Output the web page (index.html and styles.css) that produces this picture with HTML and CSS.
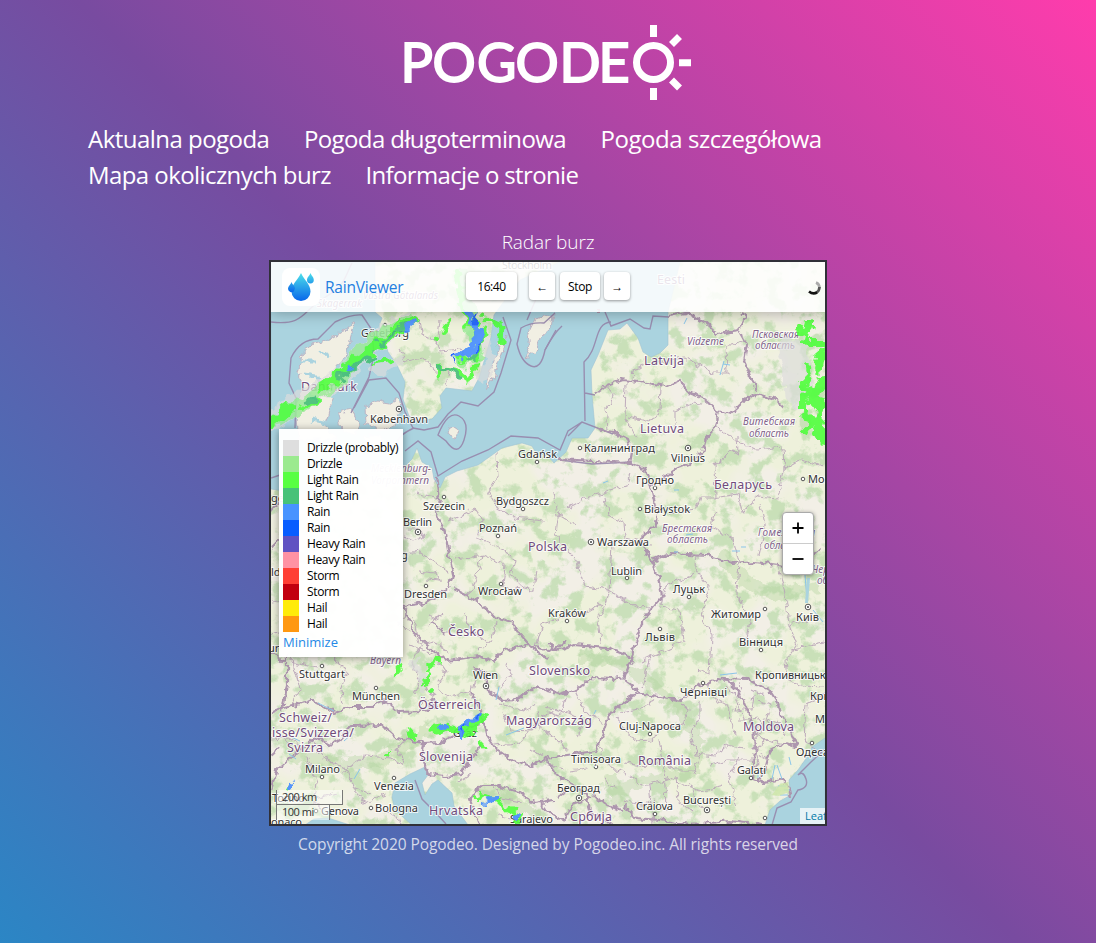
FILE: index.html
```html
<!DOCTYPE html>
<html lang="pl">
<head>
<meta charset="utf-8">
<title>Pogodeo</title>
<link rel="stylesheet" href="styles.css">
</head>
<body>
<header class="header">
  <svg class="logo" viewBox="400 20 296 84" role="img" aria-label="Pogodeo">
    <text class="logo-text" y="81.5" x="400.5 432.5 477 515.500 559.500 598.500">POGODE</text>
    <g fill="none" stroke="#fff" stroke-width="7">
      <circle cx="653.5" cy="62.4" r="17"/>
      <path d="M653.5 25v12M653.5 88v12M679 62.7h12M671.5 44.5l8-8M671.5 80l8 8"/>
    </g>
  </svg>
</header>
<nav class="nav">
  <a class="nav-link n1">Aktualna pogoda</a>
  <a class="nav-link n2">Pogoda długoterminowa</a>
  <a class="nav-link n3">Pogoda szczegółowa</a>
  <a class="nav-link n4">Mapa okolicznych burz</a>
  <a class="nav-link n5">Informacje o stronie</a>
</nav>
<main class="main">
  <h1 class="title">Radar burz</h1>
  <section class="radar">
    <svg class="map" viewBox="271 262 554 562">
      <defs>
        <filter id="forest" x="0" y="0" width="100%" height="100%" color-interpolation-filters="sRGB">
          <feTurbulence type="fractalNoise" baseFrequency=".06" numOctaves="6" seed="8"/>
          <feColorMatrix values="0 0 0 0 .74  0 0 0 0 .86  0 0 0 0 .68  7 0 0 0 -3.500"/>
        </filter>
        <filter id="field" x="0" y="0" width="100%" height="100%" color-interpolation-filters="sRGB">
          <feTurbulence type="fractalNoise" baseFrequency=".018" numOctaves="3" seed="21"/>
          <feColorMatrix values="0 0 0 0 .935  0 0 0 0 .945  0 0 0 0 .86  0 6 0 0 -2.3"/>
        </filter>
        <filter id="rough" x="-5%" y="-5%" width="110%" height="110%" color-interpolation-filters="sRGB">
          <feTurbulence type="fractalNoise" baseFrequency=".15" numOctaves="2" seed="4"/>
          <feDisplacementMap in="SourceGraphic" scale="8" xChannelSelector="R" yChannelSelector="G"/>
        </filter>
        <filter id="rain" x="-10%" y="-10%" width="120%" height="120%" color-interpolation-filters="sRGB">
          <feTurbulence type="fractalNoise" baseFrequency=".1" numOctaves="2" seed="9"/>
          <feDisplacementMap in="SourceGraphic" scale="15" xChannelSelector="R" yChannelSelector="G"/>
          <feGaussianBlur stdDeviation=".5"/>
        </filter>
        <linearGradient id="drop" x1="0" y1="0" x2="0" y2="1"><stop stop-color="#4de0ea"/><stop offset="1" stop-color="#0866ea"/></linearGradient>
      </defs>
      <rect x="271" y="262" width="554" height="562" fill="#f2efe6"/>
      <rect x="271" y="262" width="554" height="562" filter="url(#field)"/>
      <rect x="271" y="262" width="554" height="562" filter="url(#forest)" opacity=".75"/>
      <g fill="none" stroke="#b4d5a0" stroke-opacity=".4" stroke-width="12" filter="url(#rain)">
        <path d="M580 655l40 8 30 20 30 25 18 35 -5 30 -50 8 -30 10M737 580l40 15 40 -10M290 755l50 10 40 -5 50 -30M610 775l10 30M720 555l30 30M480 785l60 30"/>
      </g>

      <!-- seas -->
      <g fill="#aad3df" stroke="#9fc3d3" stroke-width=".6">
        <path d="M271 262H375V312L382 318 379 326 384 338 388 352 397 365 405 382 403 399 409 416 418 421 432 419 442 408 440 396 446 388 472 391 479 378 485 358 491 337 494 315 505 300 520 280 560 262H680L668 312V345L660 353 651 357 643 352 638 338 627 323 620 329 608 330 602 345 598 355 591 370 592 395 595 428 588 438H572L566 452 554 463 548 456 536 453 532 446 522 443 502 448 478 465 457 471 445 477 440 488 434 479 432 468 422 462 417 448 412 459 403 468 350 470 340 500 271 489Z"/>
        <path d="M392 797L395 783 410 774 425 767 428 775 422 783 425 795 432 784 438 780 452 793 454 806 468 825H412L395 810ZM328 818L350 825H305L314 819Z"/>
        <path d="M825 738L812 747 805 760 798 770 789 780 791 795 780 801 770 810 765 825H825Z"/>
      </g>

      <!-- peninsulas and islands -->
      <g fill="#f1efe3" stroke="#b9a9bd" stroke-width=".8" filter="url(#rough)">
        <path d="M355 323L340 333 326 341 311 345 302 355 298 372 303 388 295 407 298 440H336L325 425 329 410 335 393 348 386 342 376 337 367 346 356 350 340Z"/>
        <path d="M338 413L352 410 360 424 355 435 341 430ZM365 407L378 401 390 403 398 398 401 411 394 426 382 431 366 423ZM363 435l18 2 5 7 -20 3z"/>
        <path d="M505 336L500 345 489 374 487 389 492 381 503 348ZM553 315L535 319 528 334 530 346 526 358 534 352 540 338 551 328ZM449 427L458 433 455 438 447 434Z"/>
      </g>
      <path d="M304 374l12 2 8 12M318 350l12 6M299 361l18 0M329 395l13 2M340 368l-9 7M308 393l12 9M326 423l-14 -3" stroke="#aad3df" stroke-width="3" fill="none" filter="url(#rough)"/>

      <!-- maritime limits -->
      <g fill="none" stroke="#9787ac" stroke-width="1.400" opacity=".9">
        <path d="M271 322C305 326 302 311 324 298S344 278 352 263M295 428L296 398 289 383 291 358Q300 339 318 339L335 322Q351 314 362 315L372 330 374 355 369 377 351 413M354 408L369 380 386 378 399 393 405 412 413 428 424 430 438 427 448 414Q455 408 461 402L478 406 494 392 501 373 511 340 503 317"/>
        <path d="M555 313L544 323Q531 322 521 328L517 344Q521 362 531 366T545 350L556 330M405 451L418 441 431 452 438 476 462 461 488 450 511 436 538 438 560 450 568 431 582 422 613 434M438 435Q448 410 459 416T464 440 446 441ZM414 428Q398 435 397 443M560 460L592 464 632 462M605 312L611 326 630 319 644 328 650 329 653 316 669 317M611 322C593 323 600 348 584 362L585 421M585 393L595 395M582 422L568 436"/>
        <path d="M415 780L422 799 435 812 446 824M772 825L777 808 791 802 798 790Q809 788 806 779T798 775L811 762 824 750"/>
        <path d="M527 320L536 299 539 282M545 350Q554 333 562 326M271 478L280 475"/>
      </g>

      <!-- national borders -->
      <g fill="none" stroke="#ad96ae" stroke-width="2.200" stroke-linejoin="round" filter="url(#rough)">
        <path d="M436 476L439 500 436 515 444 528 448 550 453 574 449 590M453 588L467 595 486 608 494 617 512 622 519 633 534 650 548 659M404 606L426 603 446 589M404 606L412 630 432 650 448 661 478 656 493 662 504 650 527 645 548 650 558 647 566 640M595 312L600 312M668 316L686 312 705 323 717 334 739 331 746 315 742 312M740 333L747 345 744 361 752 379 756 391M596 394L606 386 622 380 640 382 667 386 680 380 688 392 702 397 718 410 730 414 742 403 756 394 774 399 784 408"/>
        <path d="M718 410L715 428 706 438 702 452 688 464 678 468 657 482M597 429L614 432 628 439 632 452 630 463 559 459M630 463L644 468 649 479 657 513 656 525 640 539 649 557 659 577 662 596 644 618 634 646 632 657M652 561L670 553 706 555 734 564 755 562 785 566 806 557 820 549"/>
        <path d="M548 645L560 650 574 645 606 648 632 657 624 677 614 679 591 678 579 688 560 694 535 687 516 700 503 701 488 691 486 674 472 667M633 657L624 680 639 692 615 709 607 721 600 742 595 751 581 753 546 758M633 693L660 696 682 701 694 688 717 679 728 680 742 697 753 725 755 750 753 779 763 783 780 779 788 785 791 799"/>
        <path d="M722 678L748 679 770 691 778 703 780 714 790 730 797 747 785 743 770 751 766 766 758 780M471 692L481 711 486 734 496 749 513 761 532 766 546 758 557 775 573 784 586 795 591 813 612 824M271 714L284 708 305 703 312 700 335 713 350 707 373 707 384 700 399 712 423 711 435 705 432 697M271 790L277 770 293 756 316 737 331 745 340 740 352 726 382 725 397 738 424 743 440 742 462 731 480 724M424 743L422 759 428 774 447 776 462 774 470 760 482 744M479 825L470 800 481 785 496 785 519 792 535 803 552 800"/>
        <path d="M622 810L608 805 592 795M624 805L635 818 659 820 690 825 730 821 764 825M271 511L279 500 285 520M271 652L282 662 290 654M287 660L287 685 283 711M591 798L571 805 563 823M557 797L568 789M563 820L550 814 541 803M271 548L279 540M445 633L432 622M271 756L280 748"/>
      </g>

      <!-- regional borders -->
      <g fill="none" stroke="#b9a4b8" stroke-width="1.1" opacity=".85" filter="url(#rough)">
        <path d="M468 360L460 350 440 352 437 341 421 334 419 319M446 386L449 371 435 371 423 358 406 361 399 349M440 320L437 344M632 380L633 369 653 362 685 358 713 373 727 373 726 346 743 342M605 385L613 395 606 408 608 429M626 382L625 418 638 439M661 386L660 410 650 422 628 417M676 429L676 411 692 403 702 404M715 428L745 445 756 450 783 447 784 469 800 460 824 466"/>
        <path d="M566 509L589 497 627 486 630 472M605 498L608 514 624 523 625 538 641 542M496 453L497 478 488 492 498 508 515 518 544 521M450 520L475 509 482 519 477 538 504 550 515 561 511 576 530 591M456 559L484 555 505 565 503 587 533 590 536 571M482 555L473 589 465 596M553 493L557 514 577 526M559 509L556 535 578 563 585 586 609 590 626 603M612 544L609 592 598 620 601 643M612 543L652 545M535 650L543 624 566 615 586 613 601 604M609 590L628 602 640 608 656 606"/>
        <path d="M667 513L696 510 700 498 716 498 715 465 733 450 738 453 737 437M715 510L711 526 733 539 736 550 739 562M714 498L738 494 742 513 758 496 778 498 785 465M759 502L765 530 759 555M739 560L737 594 750 623 744 645M697 554L696 570 710 588 701 618 712 635 710 674 697 670M695 573L666 586 661 604M659 607L680 610 684 641 667 649 641 661M777 565L784 588 789 624 797 645 786 660 788 680 802 686 824 687M789 625L817 617M790 650L824 642M806 704L804 740 814 750M651 657L642 686M806 704L824 694M707 683L710 695 727 704 735 735"/>
        <path d="M620 712L640 709 655 699M617 718L635 741 652 740 661 729 683 725 688 709 682 703M625 763L645 767 662 760 674 770 695 770M659 740L663 760 665 785 666 810M629 774L644 786 671 778 700 791 724 785M700 700L700 717 690 733 697 754 715 756 726 745 744 748M701 753L693 775M710 765L727 760 754 760M691 783L697 805 710 812M738 756L729 779 737 805M622 801L641 805 656 800M649 785L653 823M676 776L678 801 691 812M599 747L610 767 625 774"/>
        <path d="M404 554L421 552 433 561 448 571M415 493L436 497M407 530h14l3 7 -11 4 -8 -4M418 571l17 2 5 7 -13 -1M271 602L298 597M271 634L283 631M292 659L300 689 291 704M290 662L317 668M334 659L347 672 341 690 343 704M413 617L419 644 433 641 449 652M427 626L443 614 437 620 428 617M465 613L470 632 487 642M496 622L491 641 479 651M407 610L399 625 411 633M410 645L435 655 446 672 437 685 446 697 472 691 475 679M422 645L412 663 420 681 413 694M422 685L435 695 417 706"/>
        <path d="M498 689L510 674 506 665M500 704L523 710 535 704M504 712L511 730 531 731 549 712 560 716 567 696M495 745L519 743 535 724M537 710L540 728 558 741 569 751M546 707L568 713 583 721 578 736M574 689L585 712 607 724M529 748L542 757M271 739L289 737 300 745M280 735L294 750M314 740L322 757 347 769 355 789 370 794M354 790L364 803 387 794M307 757L317 783 315 799 336 793M311 801L328 813M384 810L405 824M342 773L365 756 392 758 404 766M408 737L396 749 405 764M493 785L501 798 521 802M458 783L471 775M500 815L519 818M545 764L563 769M604 779L615 789M571 771L588 768"/>
        <path d="M726 686l12 12 -4 12 18 0 2 -15M739 684l3 15M752 690l12 6M738 706l6 13 14 -2 6 12 -9 11M758 700l12 5 -4 14 12 4M763 719l14 10M755 732l12 8 -12 10 4 13 -8 8M738 720l12 0M765 740l20 4M758 725l-4 25M760 755l10 6M777 720l8 15"/>
      </g>

      <g fill="none" stroke="#8ac5e9" stroke-width="1">
        <path d="M720 375l4-14M704 340v4M723 364l7 1M687 318l-3 6M674 490h5M686 535l7-1M674 552h4M732 551h8M741 547h5M688 532l4-3M506 735l18-7M354 779l6-10M344 741l9-8M291 737l9 4M289 754l7 5M318 703l16 8M782 779l-5-14M775 765l-3 14M758 771v7M791 765l-2-8M805 575l2 25M813 610l10 12M720 675l17-2M596 710l-2 4M603 483l5-2M496 700l3-13M778 786h8m-2 4h6m-10 5h8"/>
      </g>
      <path d="M807 578l3 0-2 25-3 0z" fill="#aad3df"/>
      <path d="M780 784l8-2 1 10-10 4-7-1z" fill="#cde6a8" opacity=".8"/>

      <!-- city markers -->
      <g fill="#fff" stroke="#555" stroke-width="1">
        <circle cx="385" cy="325" r="1.8"/><circle cx="537" cy="462" r="1.8"/><circle cx="580" cy="448" r="1.8"/><circle cx="444" cy="497" r="1.8"/><circle cx="523" cy="509" r="1.8"/><circle cx="498" cy="536" r="1.8"/><circle cx="655" cy="488" r="1.8"/><circle cx="640" cy="509" r="1.8"/><circle cx="627" cy="578" r="1.8"/><circle cx="501" cy="584" r="1.8"/><circle cx="426" cy="586" r="1.8"/><circle cx="689" cy="597" r="1.8"/><circle cx="765" cy="609" r="1.8"/><circle cx="567" cy="621" r="1.8"/><circle cx="660" cy="629" r="1.8"/><circle cx="761" cy="650" r="1.8"/><circle cx="322" cy="666" r="1.8"/><circle cx="376" cy="688" r="1.8"/><circle cx="703" cy="683" r="1.8"/><circle cx="650" cy="734" r="1.8"/><circle cx="812" cy="743" r="1.8"/><circle cx="322" cy="777" r="1.8"/><circle cx="394" cy="778" r="1.8"/><circle cx="596" cy="767" r="1.8"/><circle cx="751" cy="778" r="1.8"/><circle cx="371" cy="808" r="1.8"/><circle cx="655" cy="814" r="1.8"/><circle cx="765" cy="818" r="1.8"/><circle cx="803" cy="479" r="1.8"/><circle cx="316" cy="811" r="1.8"/>
        <g><circle cx="399" cy="409" r="2.8"/><circle cx="418" cy="532" r="2.8"/><circle cx="688" cy="448" r="2.8"/><circle cx="591" cy="542" r="2.8"/><circle cx="808" cy="607" r="2.8"/><circle cx="486" cy="686" r="2.8"/><circle cx="579" cy="798" r="2.8"/><circle cx="707" cy="810" r="2.8"/></g>
        <g fill="#444" stroke="none"><circle cx="399" cy="409" r="1"/><circle cx="418" cy="532" r="1"/><circle cx="688" cy="448" r="1"/><circle cx="591" cy="542" r="1"/><circle cx="808" cy="607" r="1"/><circle cx="486" cy="686" r="1"/><circle cx="579" cy="798" r="1"/><circle cx="707" cy="810" r="1"/></g>
      </g>

      <g class="city">
        <text x="361" y="337" textLength="48">Göteborg</text><text x="370" y="423" textLength="58">København</text><text x="518" y="458" textLength="39">Gdańsk</text><text x="584" y="452" textLength="71">Калининград</text><text x="671" y="462" textLength="34">Vilnius</text><text x="636" y="484" textLength="38">Гродно</text><text x="423" y="510" textLength="42">Szczecin</text><text x="496" y="505" textLength="53">Bydgoszcz</text><text x="644" y="513" textLength="46">Białystok</text><text x="403" y="526" textLength="29">Berlin</text><text x="479" y="532" textLength="38">Poznań</text><text x="597" y="546" textLength="52">Warszawa</text><text x="611" y="575" textLength="31">Lublin</text><text x="478" y="595" textLength="44">Wrocław</text><text x="404" y="598" textLength="43">Dresden</text><text x="673" y="593" textLength="32">Луцьк</text><text x="548" y="617" textLength="38">Kraków</text><text x="711" y="618" textLength="50">Житомир</text><text x="796" y="621" textLength="23">Київ</text><text x="645" y="641" textLength="30">Львів</text><text x="739" y="646" textLength="44">Вінниця</text><text x="299" y="678" textLength="46">Stuttgart</text><text x="473" y="679" textLength="25">Wien</text><text x="755" y="679" textLength="84">Кропивницький</text><text x="352" y="700" textLength="48">München</text><text x="680" y="696" textLength="47">Чернівці</text><text x="810" y="700">Кривий</text><text x="815" y="723">Миколаїв</text><text x="619" y="730" textLength="62">Cluj-Napoca</text><text x="453" y="737" textLength="24">Graz</text><text x="796" y="756" textLength="33">Одеса</text><text x="571" y="763" textLength="50">Timișoara</text><text x="305" y="773" textLength="35">Milano</text><text x="737" y="774" textLength="29">Galați</text><text x="374" y="790" textLength="40">Venezia</text><text x="557" y="792" textLength="43">Београд</text><text x="272" y="802">Torino</text><text x="375" y="812" textLength="43">Bologna</text><text x="321" y="815" textLength="38">Genova</text><text x="636" y="810" textLength="37">Craiova</text><text x="683" y="804" textLength="48">București</text><text x="510" y="823" textLength="43">Sarajevo</text><text x="271" y="826" textLength="31">onaco</text><text x="808" y="483">Могилёв</text><text x="271" y="502">ge</text><text x="401" y="559">g</text><text x="271" y="576">ld</text><text x="268" y="652">ur</text>
      </g>
      <g class="country">
        <text x="301" y="391" textLength="56">Danmark</text><text x="644" y="365" textLength="40">Latvija</text><text x="640" y="433" textLength="44">Lietuva</text><text x="714" y="489" textLength="58">Беларусь</text><text x="528" y="551" textLength="39">Polska</text><text x="448" y="636" textLength="36">Česko</text><text x="529" y="675" textLength="61">Slovensko</text><text x="418" y="709" textLength="63">Österreich</text><text x="506" y="725" textLength="86">Magyarország</text><text x="279" y="722" textLength="53">Schweiz/</text><text x="272" y="737" textLength="82">isse/Svizzera/</text><text x="287" y="752" textLength="36">Svizra</text><text x="419" y="761" textLength="54">Slovenija</text><text x="743" y="731" textLength="51">Moldova</text><text x="638" y="765" textLength="53">România</text><text x="429" y="815" textLength="54">Hrvatska</text><text x="570" y="821" textLength="42">Србија</text><text x="657" y="284" textLength="28">Eesti</text>
      </g>
      <g class="region">
        <text x="687" y="345" textLength="37">Vidzeme</text><text x="752" y="338" textLength="47">Псковская</text><text x="755" y="349" textLength="40">область</text><text x="743" y="425" textLength="52">Витебская</text><text x="749" y="437" textLength="40">область</text><text x="662" y="532" textLength="50">Брестская</text><text x="667" y="543" textLength="41">область</text><text x="758" y="536" textLength="57">Гомельская</text><text x="764" y="549" textLength="40">область</text><text x="371" y="472" textLength="60">Mecklenburg-</text><text x="371" y="484" textLength="58">Vorpommern</text><text x="370" y="664" textLength="31">Bayern</text><text x="812" y="573">Черн</text><text x="817" y="584">обл</text><text x="317" y="307" textLength="45">Skagerrak</text><text x="363" y="299" textLength="75">Västra Götalands</text>
      </g>
      <text class="city" x="502" y="269" textLength="50">Stockholm</text>

      <!-- precipitation -->
      <g filter="url(#rain)" fill="none" stroke-linecap="round" stroke-linejoin="round" opacity=".9">
        <g stroke="#ddd" opacity=".75">
          <path d="M270 423L300 401 340 378 368 348 407 320" stroke-width="20"/><path d="M792 351l5 15 2 30" stroke-width="27"/><path d="M415 662l10 25M373 369l26-8M480 327l12 33-11 18" stroke-width="10"/>
        </g>
        <g stroke="#98e995" opacity=".9"><path d="M273 422L312 398 341 376 365 347 411 319" stroke-width="14"/><path d="M460 275l12 47 6 32-14 6" stroke-width="13"/></g>
        <g stroke="#50ff3d">
          <path d="M270 424L288 408M323 388L349 365 376 346 394 333 414 319" stroke-width="10"/>
          <path d="M299 408L319 400M375 363l19-2M399 320l-12 18" stroke-width="4"/>
          <path d="M455 270l12 53 11 2M449 321l-6 10M485 318l17 7-1 17M482 331l-4 26-16 3M438 377l1-10 18 3 13 9M470 375l6-10" stroke-width="5"/>
          <path d="M436 338l1 0M396 672l6-7M423 683l5-8 0 13M427 670l9-5 3-6" stroke-width="4"/>
          <path d="M412 733l1-1M433 730l15-2 19 4 15-15" stroke-width="9"/><path d="M478 800l4-7 15 6 8 8 18 8-5 6M285 790l5-6M387 756l4-2M480 743l4 4" stroke-width="4"/>
          <path d="M809 323l-5 20 18 0M799 330l8 3M822 350l-3 20M807 369l2 8-8 8 10 7-8 7 0 14 9 6-8 14M822 378l-5 18 8 12-5 20 3 12M817 396l-8 6M820 420l-10 4" stroke-width="6"/>
          <path d="M813 394l10 20-5 22" stroke-width="8"/>
        </g>
        <g stroke="#44bf76"><path d="M338 378L356 367 371 357M379 344L408 323M308 401l8-3M438 368l12 1 9 8M474 321l6 26-11 13" stroke-width="5"/></g>
        <g stroke="#468dff"><path d="M468 315l9 14 1 16-17 11M405 330l9-9M349 369l1-1M442 728l4-2M459 729l7-4 14-10M463 736l1-4M488 799l7-1M288 788l3-4M518 814l1 0" stroke-width="6"/></g>
        <g stroke="#145aff"><path d="M476 316l-1 9M480 345l-3 4M457 356l-2 3M463 730l3-5M475 718l3-2" stroke-width="3"/></g>
      </g>
    </svg>

    <div class="topbar">
      <div class="brand">
        <span class="brand-icon"><svg viewBox="0 0 38 38"><g fill="url(#drop)"><path d="M19 5C16 12 9.500 16 9.500 23.500a9.500 9.500 0 0 0 19 0C28.500 16 22 12 19 5Z"/><path d="M28.500 5C27.500 8 25 9 25 12a3.400 3.400 0 0 0 6.800 0C31.800 9 29.500 8 28.500 5ZM9.500 14C8.500 17 6 18 6 21a3.600 3.600 0 0 0 6 2.200L13 20C12 17 10.500 17 9.500 14Z"/></g></svg></span>
        <span class="brand-name">RainViewer</span>
      </div>
      <div class="controls">
        <span class="btn time">16:40</span>
        <span class="btn back">←</span>
        <span class="btn stop">Stop</span>
        <span class="btn">→</span>
      </div>
      <svg class="spinner" viewBox="0 0 16 16" fill="none" stroke-width="2.600"><path d="M10 2.500Q13.500 4 13.500 8" stroke="#aaa"/><path d="M13.500 7Q13.500 11 10 12.800" stroke="#555"/><path d="M11 12.500Q7 14.800 3 11.500" stroke="#111"/></svg>
    </div>

    <div class="legend">
      <div class="row"><i class="swatch c1"></i>Drizzle (probably)</div>
      <div class="row"><i class="swatch c2"></i>Drizzle</div>
      <div class="row"><i class="swatch c3"></i>Light Rain</div>
      <div class="row"><i class="swatch c4"></i>Light Rain</div>
      <div class="row"><i class="swatch c5"></i>Rain</div>
      <div class="row"><i class="swatch c6"></i>Rain</div>
      <div class="row"><i class="swatch c7"></i>Heavy Rain</div>
      <div class="row"><i class="swatch c8"></i>Heavy Rain</div>
      <div class="row"><i class="swatch c9"></i>Storm</div>
      <div class="row"><i class="swatch c10"></i>Storm</div>
      <div class="row"><i class="swatch c11"></i>Hail</div>
      <div class="row"><i class="swatch c12"></i>Hail</div>
      <a class="minimize">Minimize</a>
    </div>

    <div class="zoom">
      <span class="zoom-btn"><svg viewBox="0 0 12 12"><path d="M6 .5v11M.5 6h11"/></svg></span>
      <span class="zoom-btn"><svg viewBox="0 0 12 12"><path d="M.5 6h11"/></svg></span>
    </div>

    <div class="scale">
      <span class="scale-line km">200 km</span>
      <span class="scale-line mi">100 mi</span>
    </div>
    <div class="attribution">Leaflet</div>
  </section>
</main>
<footer class="footer">Copyright 2020 Pogodeo. Designed by Pogodeo.inc. All rights reserved</footer>
</body>
</html>
```
FILE: styles.css
```css
* { box-sizing: border-box; }

body {
  margin: 0;
  height: 943px;
  overflow: hidden;
  background: linear-gradient(225deg, #ff3cac 0%, #784ba0 50%, #2b86c5 100%);
  color: #fff;
  font-family: "Open Sans", "Noto Sans", sans-serif;
}

.header { display: flex; justify-content: center; padding: 20px 0 17px; }
.logo { display: block; width: 296px; height: 84px; }
.logo-text { font: 400 54px Lato, sans-serif; fill: #fff; stroke: #fff; stroke-width: 1.900px; }

.nav {
  display: flex;
  flex-wrap: wrap;
  column-gap: 34.500px;
  margin: 0 88px;
  height: 72px;
}
.nav-link { font-size: 24px; line-height: 36px; white-space: nowrap; }
.n1 { letter-spacing: -.53px; }
.n2 { letter-spacing: -.6px; }
.n3 { letter-spacing: -.46px; }
.n4 { letter-spacing: -.58px; }
.n5 { letter-spacing: -.65px; }

.main { display: flex; flex-direction: column; align-items: center; padding-top: 34px; }
.title { margin: 0; font-size: 19px; line-height: 30px; height: 33px; font-weight: 300; letter-spacing: -.1px; }

.radar {
  position: relative;
  width: 558px;
  height: 566px;
  border: 2px solid #303038;
  overflow: hidden;
  color: #000;
}
.map { display: block; width: 554px; height: 562px; }
.map text { font-family: "Noto Sans", sans-serif; paint-order: stroke; stroke: #fffc; stroke-width: 2px; stroke-linejoin: round; }
.city { font-size: 11px; fill: #333; }
.country { font-size: 12.5px; fill: #704b7b; }
.region { font-size: 10px; font-style: italic; fill: #81618a; }

.topbar {
  position: absolute;
  inset: 0 0 auto 0;
  height: 50px;
  display: flex;
  align-items: center;
  background: rgba(255, 255, 255, .86);
  box-shadow: 0 1px 14px rgba(0, 0, 0, .3);
}
.brand { display: flex; align-items: center; gap: 5px; width: 195px; padding-left: 11px; }
.brand-icon { width: 38px; height: 38px; border-radius: 8px; background: #fff; }
.brand-icon svg { display: block; width: 38px; height: 38px; }
.brand-name { color: #247fe0; font-size: 15.500px; letter-spacing: -.2px; }
.controls { display: flex; align-items: center; gap: 4px; margin-top: -2px; }
.btn {
  display: flex;
  align-items: center;
  justify-content: center;
  width: 26px;
  height: 28px;
  border-radius: 4px;
  background: #fff;
  box-shadow: 0 1px 3px rgba(0, 0, 0, .4);
  font-size: 12px;
  letter-spacing: -.4px;
}
.time { width: 51px; margin-right: 8px; }
.back { margin-right: 1px; }
.stop { width: 40px; }
.spinner { width: 16px; height: 16px; margin: 2px 3px 0 auto; }

.legend {
  position: absolute;
  left: 8px;
  top: 167px;
  width: 124px;
  height: 228px;
  padding: 11px 4px 0;
  background: rgba(255, 255, 255, .97);
  box-shadow: 0 1px 8px rgba(0, 0, 0, .4);
}
.row { display: flex; gap: 8px; height: 16px; font-size: 12px; line-height: 16px; letter-spacing: -.36px; white-space: nowrap; }
.swatch { width: 16px; height: 16px; flex: none; }
.c1 { background: #dedede; }
.c2 { background: #9bea8f; }
.c3 { background: #58ff42; }
.c4 { background: #47c278; }
.c5 { background: #4893ff; }
.c6 { background: #085dff; }
.c7 { background: #6052c2; }
.c8 { background: #ff92a3; }
.c9 { background: #ff3f35; }
.c10 { background: #c2000f; }
.c11 { background: #ffeb0a; }
.c12 { background: #ff9811; }
.minimize { display: block; color: #2589e6; font-size: 13px; line-height: 21px; }

.zoom {
  position: absolute;
  left: 511px;
  top: 250px;
  width: 32px;
  height: 63px;
  border: 1px solid #aaa;
  border-radius: 4px;
  background: #fff;
  box-shadow: 0 1px 4px rgba(0, 0, 0, .4);
}
.zoom-btn { display: flex; align-items: center; justify-content: center; height: 30px; }
.zoom-btn + .zoom-btn { border-top: 1px solid #ccc; }
.zoom-btn svg { width: 12px; height: 12px; stroke: #000; stroke-width: 1.800; }

.scale { position: absolute; left: 5px; top: 528px; display: flex; flex-direction: column; }
.scale-line {
  height: 15px;
  padding-left: 5px;
  border: 1px solid #777;
  border-top: 0;
  background: rgba(255, 255, 255, .5);
  color: #333;
  font-size: 11px;
  line-height: 14px;
  letter-spacing: -.5px;
}
.km { width: 67px; }
.mi { width: 54px; border-bottom: 0; }
.attribution {
  position: absolute;
  left: 529px;
  bottom: 0;
  width: 45px;
  height: 16px;
  padding-left: 5px;
  background: rgba(255, 255, 255, .7);
  color: #0078a8;
  font-size: 11px;
  line-height: 16px;
}

.footer { margin-top: 6px; text-align: center; font-size: 15.500px; line-height: 24px; letter-spacing: -.08px; color: rgba(255, 255, 255, .75); }
```
